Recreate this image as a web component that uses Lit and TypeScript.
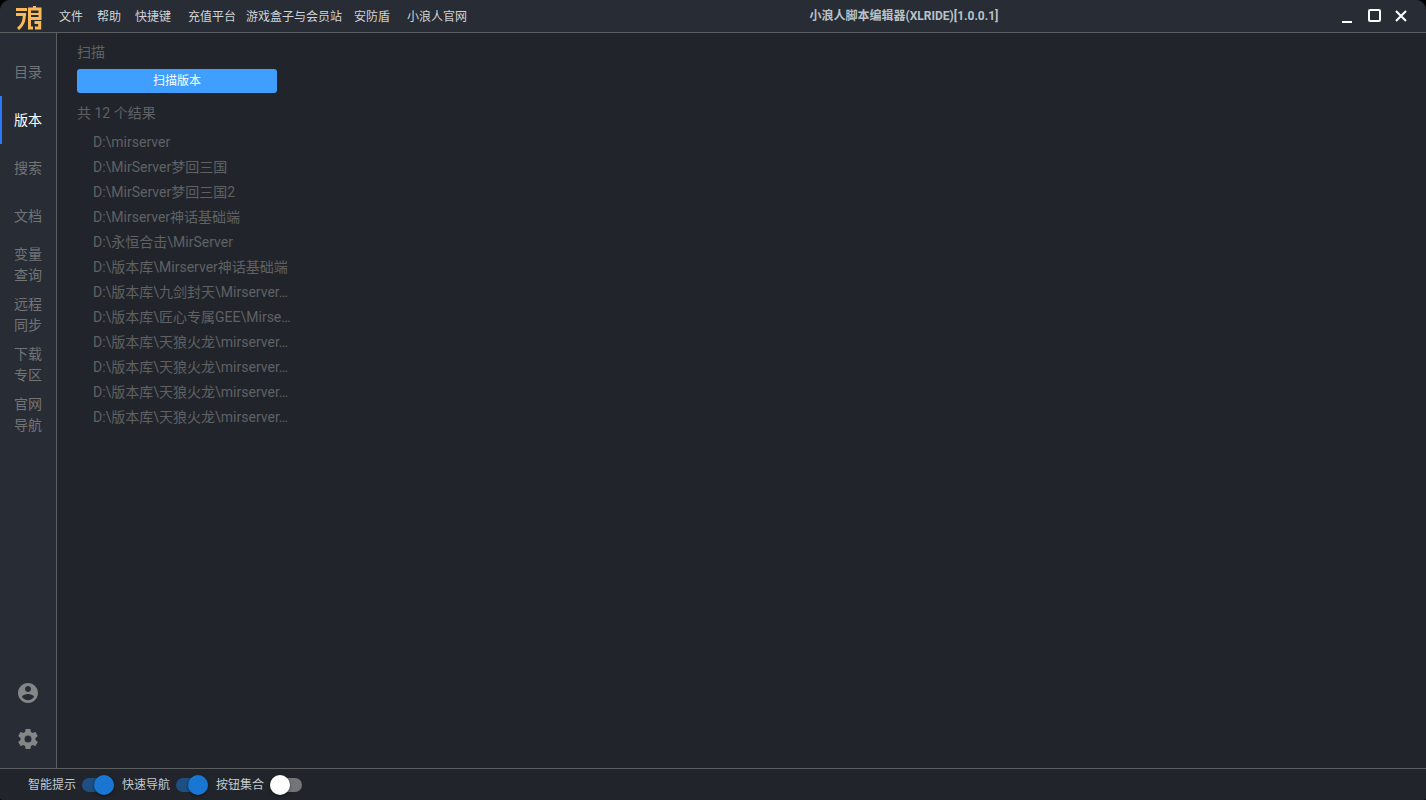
import { LitElement, html, css, svg } from "lit";
import { customElement, state } from "lit/decorators.js";
import { classMap } from "lit/directives/class-map.js";

const MENU = ["文件", "帮助", "快捷键", "充值平台", "游戏盒子与会员站", "安防盾", "小浪人官网"];

const TABS: string[][] = [
  ["目录"], ["版本"], ["搜索"], ["文档"],
  ["变量", "查询"], ["远程", "同步"], ["下载", "专区"], ["官网", "导航"],
];

const PATHS = [
  "D:\\mirserver",
  "D:\\MirServer梦回三国",
  "D:\\MirServer梦回三国2",
  "D:\\Mirserver神话基础端",
  "D:\\永恒合击\\MirServer",
  "D:\\版本库\\Mirserver神话基础端",
  "D:\\版本库\\九剑封天\\Mirserver…",
  "D:\\版本库\\匠心专属GEE\\Mirse…",
  "D:\\版本库\\天狼火龙\\mirserver…",
  "D:\\版本库\\天狼火龙\\mirserver…",
  "D:\\版本库\\天狼火龙\\mirserver…",
  "D:\\版本库\\天狼火龙\\mirserver…",
];

const ACCOUNT = svg`<path d="M12 2C6.48 2 2 6.48 2 12s4.48 10 10 10 10-4.48 10-10S17.52 2 12 2zm0 3c1.66 0 3 1.34 3 3s-1.34 3-3 3-3-1.34-3-3 1.34-3 3-3zm0 14.2c-2.5 0-4.71-1.28-6-3.22.03-1.99 4-3.08 6-3.08 1.99 0 5.97 1.09 6 3.08-1.29 1.94-3.5 3.22-6 3.22z"/>`;
const GEAR = svg`<path d="M12 15.5A3.5 3.5 0 0 1 8.5 12 3.5 3.5 0 0 1 12 8.5a3.5 3.5 0 0 1 3.5 3.5 3.5 3.5 0 0 1-3.5 3.5m7.43-2.53c.04-.32.07-.64.07-.97s-.03-.66-.07-1l2.11-1.63c.19-.15.24-.42.12-.64l-2-3.46c-.12-.22-.39-.31-.61-.22l-2.49 1c-.52-.39-1.06-.73-1.69-.98l-.37-2.65A.506.506 0 0 0 14 2h-4c-.25 0-.46.18-.5.42l-.37 2.65c-.63.25-1.17.59-1.69.98l-2.49-1c-.22-.09-.49 0-.61.22l-2 3.46c-.13.22-.07.49.12.64L4.57 11c-.04.34-.07.67-.07 1s.03.65.07.97l-2.11 1.66c-.19.15-.25.42-.12.64l2 3.46c.12.22.39.3.61.22l2.49-1.01c.52.4 1.06.74 1.69.99l.37 2.65c.04.24.25.42.5.42h4c.25 0 .46-.18.5-.42l.37-2.65c.63-.26 1.17-.59 1.69-.99l2.49 1.01c.22.08.49 0 .61-.22l2-3.46c.12-.22.07-.49-.12-.64z"/>`;

@customElement("app-root")
export class AppRoot extends LitElement {
  @state() private tab = 1;

  static styles = css`
    :host {
      display: block;
      background: #000;
      color: #d0d4d8;
      font: 12px/18px Roboto, "Noto Sans CJK SC", sans-serif;
    }
    * { box-sizing: border-box; }
    button { border: 0; padding: 0; background: none; color: inherit; font: inherit; cursor: pointer; }
    svg { display: block; }
    .window {
      display: grid;
      grid-template-rows: 33px 1fr 32px;
      height: 100vh;
      overflow: hidden;
      background: #21252b;
      border-radius: 10px 10px 2px 2px;
    }
    .header {
      display: flex;
      align-items: center;
      background: #282c34;
      border-bottom: 1px solid #5c5d5e;
    }
    .left { display: flex; align-items: center; padding-left: 16px; gap: 10px; height: 32px; }
    .logo { fill: none; stroke: #fbba55; stroke-width: 3; align-self: flex-end; margin-bottom: 2px; }
    .menu { display: grid; grid-template-columns: 38px 38px 50px 68px 96px 60px 70px; }
    .menu button { padding-top: 2px; white-space: nowrap; }
    .title { flex: 1; margin: 0; text-align: center; font-size: 12px; font-weight: 700; color: #b8c2c8; }
    .controls { display: flex; gap: 11px; padding: 0 17px 0 3px; }
    .controls svg { fill: none; stroke: #fff; stroke-width: 2; }
    .body { display: grid; grid-template-columns: 57px 1fr; min-height: 0; }
    .side {
      display: flex;
      flex-direction: column;
      justify-content: space-between;
      padding: 15px 0 6px;
      background: #282c34;
      border-right: 1px solid #5c5d5e;
    }
    .tabs, .tools { display: flex; flex-direction: column; }
    .tab { min-height: 48px; padding: 4px 2px 4px 0; border-left: 2px solid transparent; font-size: 14px; line-height: 21px; color: #727476; }
    .tab.active { border-color: #2979ff; color: #fff; }
    .tab span { display: block; }
    .tool { display: grid; place-items: center; height: 46px; }
    .tool svg { fill: #858687; }
    .main { padding: 9px 20px; font-size: 14px; line-height: 20px; color: #5f6163; }
    .main h2 { margin: 0; font: inherit; }
    .scan {
      display: block;
      width: 200px;
      height: 24px;
      margin: 7px 0 10px;
      border-radius: 3px;
      background: #409eff;
      color: #fff;
      font-size: 12px;
    }
    .paths { width: 200px; margin: 7px 16px; padding: 0; list-style: none; line-height: 25px; }
    .paths li { white-space: nowrap; cursor: pointer; }
    .footer { display: flex; align-items: center; gap: 8px; padding-left: 28px; border-top: 1px solid #5c5d5e; }
    .switch { display: flex; align-items: center; gap: 6px; color: #c3cacf; }
    .switch input {
      appearance: none;
      display: flex;
      align-items: center;
      width: 32px;
      height: 14px;
      margin: 0;
      border-radius: 7px;
      background: #737678;
    }
    .switch input::before {
      content: "";
      flex: none;
      width: 20px;
      height: 20px;
      border-radius: 50%;
      background: #fff;
      box-shadow: 0 1px 3px #0008;
    }
    .switch input:checked { justify-content: flex-end; background: #1d4f82; }
    .switch input:checked::before { background: #1976d2; }
  `;

  render() {
    return html`
      <div class="window">
        <header class="header">
          <div class="left">
            <svg class="logo" width="26" height="24" viewBox="0 0 26 24" aria-hidden="true">
              <path d="M0 3.5H11M0 8.5H10M8.2 8V11Q8 18 2 23"/>
              <path d="M12 3H24V12.5H13M18.5 0V3M13.5 2V22H17M18.5 16.5H23.7V22H19"/>
              <path stroke-width="2" d="M14 8H24"/>
            </svg>
            <nav class="menu">${MENU.map((m) => html`<button>${m}</button>`)}</nav>
          </div>
          <h1 class="title">小浪人脚本编辑器(XLRIDE)[1.0.0.1]</h1>
          <div class="controls">
            <button aria-label="最小化"><svg width="16" height="16" viewBox="0 0 16 16"><path d="M3 14H13"/></svg></button>
            <button aria-label="最大化"><svg width="16" height="16" viewBox="0 0 16 16"><rect x="3" y="2" width="11" height="11" rx="1"/></svg></button>
            <button aria-label="关闭"><svg width="16" height="16" viewBox="0 0 16 16"><path d="M3 3L13 13M13 3L3 13"/></svg></button>
          </div>
        </header>
        <div class="body">
          <aside class="side">
            <nav class="tabs">
              ${TABS.map((t, i) => html`
                <button class=${classMap({ tab: true, active: i === this.tab })} @click=${() => (this.tab = i)}>
                  ${t.map((line) => html`<span>${line}</span>`)}
                </button>`)}
            </nav>
            <div class="tools">
              <button class="tool" aria-label="账号"><svg width="24" height="24" viewBox="0 0 24 24">${ACCOUNT}</svg></button>
              <button class="tool" aria-label="设置"><svg width="24" height="24" viewBox="0 0 24 24">${GEAR}</svg></button>
            </div>
          </aside>
          <main class="main">
            <h2>扫描</h2>
            <button class="scan">扫描版本</button>
            <div>共 12 个结果</div>
            <ul class="paths">${PATHS.map((p) => html`<li>${p}</li>`)}</ul>
          </main>
        </div>
        <footer class="footer">
          <label class="switch">智能提示<input type="checkbox" role="switch" checked /></label>
          <label class="switch">快速导航<input type="checkbox" role="switch" checked /></label>
          <label class="switch">按钮集合<input type="checkbox" role="switch" /></label>
        </footer>
      </div>
    `;
  }
}
